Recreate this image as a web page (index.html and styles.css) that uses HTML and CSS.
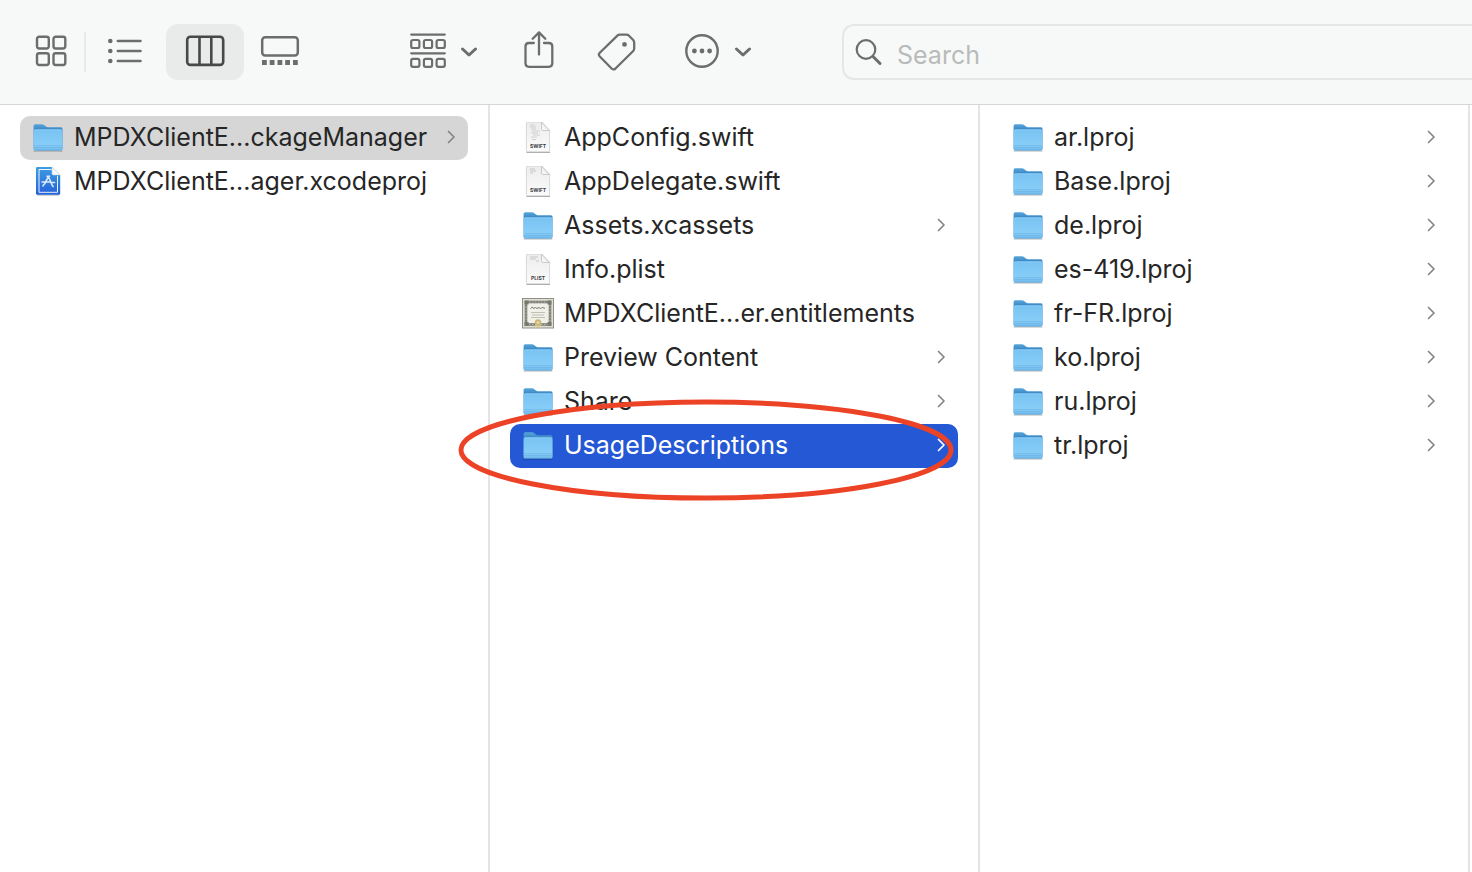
FILE: index.html
```html
<!DOCTYPE html>
<html lang="en">
<head>
<meta charset="utf-8">
<title>UsageDescriptions</title>
<link rel="stylesheet" href="styles.css">
</head>
<body>
<svg class="defs" aria-hidden="true">
  <defs>
    <linearGradient id="folder-back" x1="0" y1="0" x2="0" y2="1"><stop offset="0" stop-color="#5aa6dc"/><stop offset=".25" stop-color="#3582c0"/><stop offset="1" stop-color="#3f8cc8"/></linearGradient>
    <linearGradient id="folder-front" x1="0" y1="0" x2="0" y2="1"><stop offset="0" stop-color="#78c3f3"/><stop offset=".75" stop-color="#87cdf8"/><stop offset="1" stop-color="#70b9ea"/></linearGradient>
    <linearGradient id="proj-fill" x1="0" y1="0" x2="0" y2="1"><stop offset="0" stop-color="#3d9de2"/><stop offset="1" stop-color="#2461d8"/></linearGradient>
    <linearGradient id="page-fill" x1="0" y1="0" x2="0" y2="1"><stop offset="0" stop-color="#ececec"/><stop offset="1" stop-color="#fbfbfb"/></linearGradient>
    <linearGradient id="curl" x1="0" y1="1" x2="1" y2="0"><stop offset="0" stop-color="#ffffff"/><stop offset="1" stop-color="#dadada"/></linearGradient>
    <symbol id="chevron" viewBox="0 0 12 16"><path d="M3.500 1.500 9 7l-5.500 5.500" fill="none" stroke="currentColor" stroke-width="1.700" stroke-linecap="round" stroke-linejoin="round"/></symbol>
    <symbol id="chevron-down" viewBox="0 0 18 12"><path d="M2.500 4 9 10l6.500-6" fill="none" stroke="currentColor" stroke-width="3" stroke-linecap="round" stroke-linejoin="round"/></symbol>
    <symbol id="folder" viewBox="0 0 32 32">
      <path d="M2 29h28" stroke="#000" stroke-opacity=".3" stroke-width="1.200" stroke-linecap="round"/>
      <path d="M1.600 27V3.800Q1.600 2.200 3.200 2.200H10Q11.300 2.200 12.300 3.200L14 4.600Q14.700 5.200 16 5.200H29Q30.500 5.200 30.500 6.800V27Z" fill="url(#folder-back)"/>
      <path d="M1.600 9Q1.600 7.500 3.200 7.500H29Q30.500 7.500 30.500 9V27Q30.500 28.500 29.300 28.500H2.800Q1.600 28.500 1.600 27Z" fill="url(#folder-front)"/>
      <path d="M2.500 7.800h27" stroke="#a4dafb" stroke-width=".6"/>
      <path d="M2 23.500h28M2 25.500h28" stroke="#5ba9de" stroke-opacity=".7" stroke-width=".6"/>
      <path d="M2.500 28.200h27" stroke="#5a9fd0" stroke-width=".6"/>
    </symbol>
    <symbol id="page" viewBox="0 0 32 32">
      <path d="M5 30.200h22.500" stroke="#000" stroke-opacity=".35" stroke-width="1.400" stroke-linecap="round"/>
      <path d="M5.200 0H19.500L27.600 8.500V28.500Q27.600 29.800 26.300 29.800H5.700Q4.400 29.800 4.400 28.500V.9Q4.400 0 5.200 0Z" fill="url(#page-fill)" stroke="#cfcfcf" stroke-width=".8"/>
      <path d="M19.500 0 27.600 8.500H21Q19.500 8.500 19.500 7Z" fill="url(#curl)" stroke="#b9b9b9" stroke-width=".7"/>
    </symbol>
  </defs>
</svg>

<header class="toolbar">
  <div class="views">
    <button class="tool tool-small" aria-label="Icon view"><svg width="32" height="32" viewBox="0 0 32 32" fill="none" stroke="currentColor" stroke-width="2.400"><rect x="2" y="1.700" width="11.800" height="11.800" rx="2.200"/><rect x="18.500" y="1.700" width="11.800" height="11.800" rx="2.200"/><rect x="2" y="18.200" width="11.800" height="11.800" rx="2.200"/><rect x="18.500" y="18.200" width="11.800" height="11.800" rx="2.200"/></svg></button>
    <span class="divider"></span>
    <button class="tool tool-wide" aria-label="List view"><svg width="36" height="32" viewBox="0 0 36 32"><g fill="currentColor"><circle cx="2.300" cy="6" r="2.300"/><circle cx="2.300" cy="16" r="2.300"/><circle cx="2.300" cy="26" r="2.300"/></g><path d="M9.800 6h22.700M9.800 16h22.700M9.800 26h22.700" stroke="currentColor" stroke-width="2.500" stroke-linecap="round"/></svg></button>
    <button class="tool tool-wide selected" aria-label="Column view" aria-pressed="true"><svg width="40" height="32" viewBox="0 0 40 32" fill="none" stroke="currentColor" stroke-width="2.600"><rect x="2.200" y="1.700" width="36" height="28.200" rx="3.200"/><path d="M14.500 2v28M26.300 2v28"/></svg></button>
    <button class="tool tool-medium" aria-label="Gallery view"><svg width="40" height="32" viewBox="0 0 40 32"><rect x="2.200" y="2.200" width="35.600" height="18.200" rx="3" fill="none" stroke="currentColor" stroke-width="2.500"/><path d="M2 25h4.800v5H2zM9.700 25h4.800v5H9.700zM17.500 25h4.800v5h-4.800zM25.200 25H30v5h-4.800zM33 25h4.800v5H33z" fill="currentColor"/></svg></button>
  </div>
  <div class="actions">
    <button class="tool tool-menu" aria-label="Group items"><svg width="36" height="36" viewBox="0 0 36 36" fill="none" stroke="currentColor" stroke-width="2.200"><path d="M1.200 1.600h33.600M1.200 20.300h33.600" stroke-linecap="round"/><rect x="1.200" y="7" width="8.200" height="8" rx="1.800"/><rect x="13.900" y="7" width="8.200" height="8" rx="1.800"/><rect x="26.600" y="7" width="8.200" height="8" rx="1.800"/><rect x="1.200" y="25.900" width="8.200" height="8" rx="1.800"/><rect x="13.900" y="25.900" width="8.200" height="8" rx="1.800"/><rect x="26.600" y="25.900" width="8.200" height="8" rx="1.800"/></svg><svg width="18" height="12"><use href="#chevron-down"/></svg></button>
    <button class="tool tool-small" aria-label="Share"><svg width="32" height="40" viewBox="0 0 32 40" fill="none" stroke="currentColor" stroke-width="2.300" stroke-linecap="round" stroke-linejoin="round"><path d="M10.800 12H6Q2.500 12 2.500 15.500V32.300Q2.500 35.800 6 35.800H25.800Q29.300 35.800 29.300 32.300V15.500Q29.300 12 25.800 12H21M16 23.500V2M9.700 7.700 16 1.400l6.300 6.300"/></svg></button>
    <button class="tool tool-small" aria-label="Edit tags"><svg width="40" height="40" viewBox="0 0 40 40"><path d="M20.400 4.600Q21.300 3.700 22.600 3.700H29.500Q31 3.700 32 4.700L36 8.800Q37.200 10 37.200 11.500V17.500Q37.200 19 36.200 20L18.500 37.500Q16.500 39.200 14.600 37.500L2.800 25.500Q1 23.500 2.800 21.700Z" fill="none" stroke="currentColor" stroke-width="2.300" stroke-linejoin="round"/><circle cx="27.500" cy="13.400" r="2.400" fill="currentColor"/></svg></button>
    <button class="tool tool-menu" aria-label="More actions"><svg width="36" height="36" viewBox="0 0 36 36"><circle cx="18" cy="18" r="15.700" fill="none" stroke="currentColor" stroke-width="2.400"/><g fill="currentColor"><circle cx="10.400" cy="18" r="2.400"/><circle cx="18" cy="18" r="2.400"/><circle cx="25.600" cy="18" r="2.400"/></g></svg><svg width="18" height="12"><use href="#chevron-down"/></svg></button>
  </div>
  <label class="search">
    <svg width="28" height="28" viewBox="0 0 28 28" fill="none" stroke="currentColor" stroke-linecap="round"><circle cx="11" cy="11.500" r="9.300" stroke-width="2.200"/><path d="M18 18.500 25 25.500" stroke-width="3"/></svg>
    <input type="search" placeholder="Search" aria-label="Search">
  </label>
</header>

<main class="columns">
  <ul class="column">
    <li><a class="row current" href="#manager"><svg class="icon"><use href="#folder"/></svg><span class="name">MPDXClientE...ckageManager</span><svg class="chevron"><use href="#chevron"/></svg></a></li>
    <li><a class="row" href="#xcodeproj"><svg class="icon" viewBox="0 0 32 32">
      <path d="M5 29.200h22" stroke="#000" stroke-opacity=".25"/>
      <path d="M5.200 1H20L28.200 9V27.500Q28.200 28.700 27 28.700H5.200Q4 28.700 4 27.500V2.200Q4 1 5.200 1Z" fill="url(#proj-fill)"/>
      <path d="M19.500 3.500H7V26.300H25.500V10" fill="none" stroke="#fff" stroke-opacity=".9" stroke-width="1"/>
      <path d="M20 1 28.200 9H21.500Q20 9 20 7.500Z" fill="#f6f7f8" stroke="#c9d4dd" stroke-width=".5"/>
      <path d="M15 10.300h2.500M16.500 10.500 12.500 18M16.800 11.500 20.300 19.500M10 16h8M19.500 16.500h3M11.700 18.500l-.7 1.500M20.500 19.700l.7 .8" fill="none" stroke="#dbe9fb" stroke-width="1.600" stroke-linecap="round"/></svg><span class="name">MPDXClientE...ager.xcodeproj</span></a></li>
  </ul>

  <ul class="column">
    <li><a class="row" href="#appconfig"><svg class="icon" viewBox="0 0 32 32"><use href="#page"/><path d="M8 3h5M8 5h6M9 7h5M10 9h8M9 11h7M11 13h7M9 15h6M10 17.500h4" stroke="#c6c6c6" stroke-width=".8"/><text class="kind" x="16" y="26">SWIFT</text></svg><span class="name">AppConfig.swift</span></a></li>
    <li><a class="row" href="#appdelegate"><svg class="icon" viewBox="0 0 32 32"><use href="#page"/><path d="M8 3h5M8 5h6M8 7h3" stroke="#bdbdbd" stroke-width=".8"/><text class="kind" x="16" y="26">SWIFT</text></svg><span class="name">AppDelegate.swift</span></a></li>
    <li><a class="row" href="#assets"><svg class="icon"><use href="#folder"/></svg><span class="name">Assets.xcassets</span><svg class="chevron"><use href="#chevron"/></svg></a></li>
    <li><a class="row" href="#info"><svg class="icon" viewBox="0 0 32 32"><use href="#page"/><path d="M8 3h8M8 5h6M14 7h3" stroke="#bdbdbd" stroke-width=".8"/><text class="kind" x="16" y="26">PLIST</text></svg><span class="name">Info.plist</span></a></li>
    <li><a class="row" href="#entitlements"><svg class="icon" viewBox="0 0 32 32">
      <rect x=".5" y=".5" width="31" height="29.500" fill="#e1e0d2" stroke="#8f8f88"/>
      <rect x="4" y="4" width="24" height="22.500" fill="#f1f0e8" stroke="#7d7e77" stroke-width="2.600"/>
      <rect x="4" y="4" width="24" height="22.500" fill="none" stroke="#b5b6ac" stroke-width="1" stroke-dasharray="1.500 1.500"/>
      <path d="M2.500 2.500h4v4h-4zM25.500 2.500h4v4h-4zM2.500 24h4v4h-4zM25.500 24h4v4h-4z" fill="#777970"/>
      <path d="M8.500 10.500l2-1.500 1 1.500 2-1 1.500 1 2-1 1.500 1 2-1 2.500 .8" fill="none" stroke="#77776f"/>
      <path d="M9 14.500h14M10 17h12M9 19.500h14" stroke="#b5b4aa" stroke-width=".8"/>
      <path d="M13.500 25 13 30l3-1.500 3 1.500-.5-5Z" fill="#dfd09c"/><circle cx="16" cy="24.500" r="3.200" fill="#c9b473"/><circle cx="16" cy="24.500" r="1.600" fill="#e5d7a5"/></svg><span class="name">MPDXClientE...er.entitlements</span></a></li>
    <li><a class="row" href="#preview"><svg class="icon"><use href="#folder"/></svg><span class="name">Preview Content</span><svg class="chevron"><use href="#chevron"/></svg></a></li>
    <li><a class="row" href="#share"><svg class="icon"><use href="#folder"/></svg><span class="name">Share</span><svg class="chevron"><use href="#chevron"/></svg></a></li>
    <li><a class="row active" href="#usage"><svg class="icon"><use href="#folder"/></svg><span class="name">UsageDescriptions</span><svg class="chevron"><use href="#chevron"/></svg><svg class="highlight" viewBox="0 0 496 102" preserveAspectRatio="none" aria-hidden="true"><ellipse cx="248" cy="51" rx="245" ry="48" fill="none" stroke="#ec4327" stroke-width="5"/></svg></a></li>
  </ul>

  <ul class="column">
    <li><a class="row" href="#ar"><svg class="icon"><use href="#folder"/></svg><span class="name">ar.lproj</span><svg class="chevron"><use href="#chevron"/></svg></a></li>
    <li><a class="row" href="#base"><svg class="icon"><use href="#folder"/></svg><span class="name">Base.lproj</span><svg class="chevron"><use href="#chevron"/></svg></a></li>
    <li><a class="row" href="#de"><svg class="icon"><use href="#folder"/></svg><span class="name">de.lproj</span><svg class="chevron"><use href="#chevron"/></svg></a></li>
    <li><a class="row" href="#es"><svg class="icon"><use href="#folder"/></svg><span class="name">es-419.lproj</span><svg class="chevron"><use href="#chevron"/></svg></a></li>
    <li><a class="row" href="#fr"><svg class="icon"><use href="#folder"/></svg><span class="name">fr-FR.lproj</span><svg class="chevron"><use href="#chevron"/></svg></a></li>
    <li><a class="row" href="#ko"><svg class="icon"><use href="#folder"/></svg><span class="name">ko.lproj</span><svg class="chevron"><use href="#chevron"/></svg></a></li>
    <li><a class="row" href="#ru"><svg class="icon"><use href="#folder"/></svg><span class="name">ru.lproj</span><svg class="chevron"><use href="#chevron"/></svg></a></li>
    <li><a class="row" href="#tr"><svg class="icon"><use href="#folder"/></svg><span class="name">tr.lproj</span><svg class="chevron"><use href="#chevron"/></svg></a></li>
  </ul>
</main>
</body>
</html>
```
FILE: styles.css
```css
* {
  box-sizing: border-box;
}

body {
  display: flex;
  flex-direction: column;
  min-height: 100vh;
  margin: 0;
  background: #fff;
  color: #262626;
  font-family: Inter, "Liberation Sans", sans-serif;
  font-size: 25px;
  font-optical-sizing: none;
}

.defs {
  position: absolute;
  width: 0;
  height: 0;
}

.toolbar {
  display: flex;
  align-items: center;
  padding: 24px 0 24px 19px;
  background: #f7f9f8;
  border-bottom: 1px solid #d5d7d6;
}

.views,
.actions {
  display: flex;
  flex: none;
  align-items: center;
}

.views {
  gap: 1px;
}

.actions {
  gap: 14px;
  margin: 0 83px 0 88px;
}

.tool {
  display: flex;
  flex: none;
  align-items: center;
  justify-content: center;
  height: 56px;
  padding: 0 0 2px;
  border: 0;
  border-radius: 12px;
  background: none;
  color: #6c6e6d;
}

.tool-small {
  width: 64px;
}

.tool-medium {
  width: 70px;
}

.tool-wide {
  width: 78px;
}

.tool-menu {
  gap: 14px;
  width: 82px;
}

.tool-menu:first-child {
  margin-right: 8px;
}

.tool-menu:last-child {
  margin-left: 14px;
}

.selected {
  background: #e9ebea;
  color: #474948;
}

.divider {
  width: 2px;
  height: 40px;
  background: #e8eae9;
}

.search {
  display: flex;
  flex: 1;
  align-items: center;
  gap: 14px;
  min-width: 0;
  height: 56px;
  padding-left: 11px;
  border: 2px solid #e5e7e6;
  border-right: 0;
  border-radius: 12px 0 0 12px;
  color: #6c6e6d;
}

.search svg {
  flex: none;
}

.search input {
  flex: 1;
  min-width: 0;
  height: 52px;
  padding: 6px 0 0;
  border: 0;
  outline: 0;
  background: none;
  color: #262626;
  font: inherit;
  font-optical-sizing: none;
}

.search input::placeholder {
  color: #b9bbba;
  opacity: 1;
}

.columns {
  display: grid;
  flex: 1;
  grid-template-columns: repeat(3, 1fr);
  padding-right: 2px;
}

.column {
  min-width: 0;
  margin: 0;
  padding: 11px 20px;
  border-right: 2px solid #e4e4e4;
  list-style: none;
}

.row {
  position: relative;
  display: flex;
  align-items: center;
  gap: 10px;
  height: 44px;
  padding: 0 11px 0 12px;
  border-radius: 10px;
  color: inherit;
  text-decoration: none;
  white-space: nowrap;
}

.current {
  background: #d6d6d6;
}

.active {
  background: #2558d5;
  color: #fff;
}

.icon {
  flex: none;
  width: 32px;
  height: 32px;
  overflow: visible;
}

.name {
  flex: 1;
  min-width: 0;
  padding-bottom: 2px;
}

.chevron {
  flex: none;
  width: 12px;
  height: 16px;
  color: #858585;
}

.active .chevron {
  color: #fff;
}

.kind {
  fill: #3c3c3c;
  font-size: 5px;
  font-weight: 700;
  text-anchor: middle;
}

.highlight {
  position: absolute;
  top: -25px;
  left: -52px;
  width: calc(100% + 48px);
  height: 102px;
  pointer-events: none;
}
```
